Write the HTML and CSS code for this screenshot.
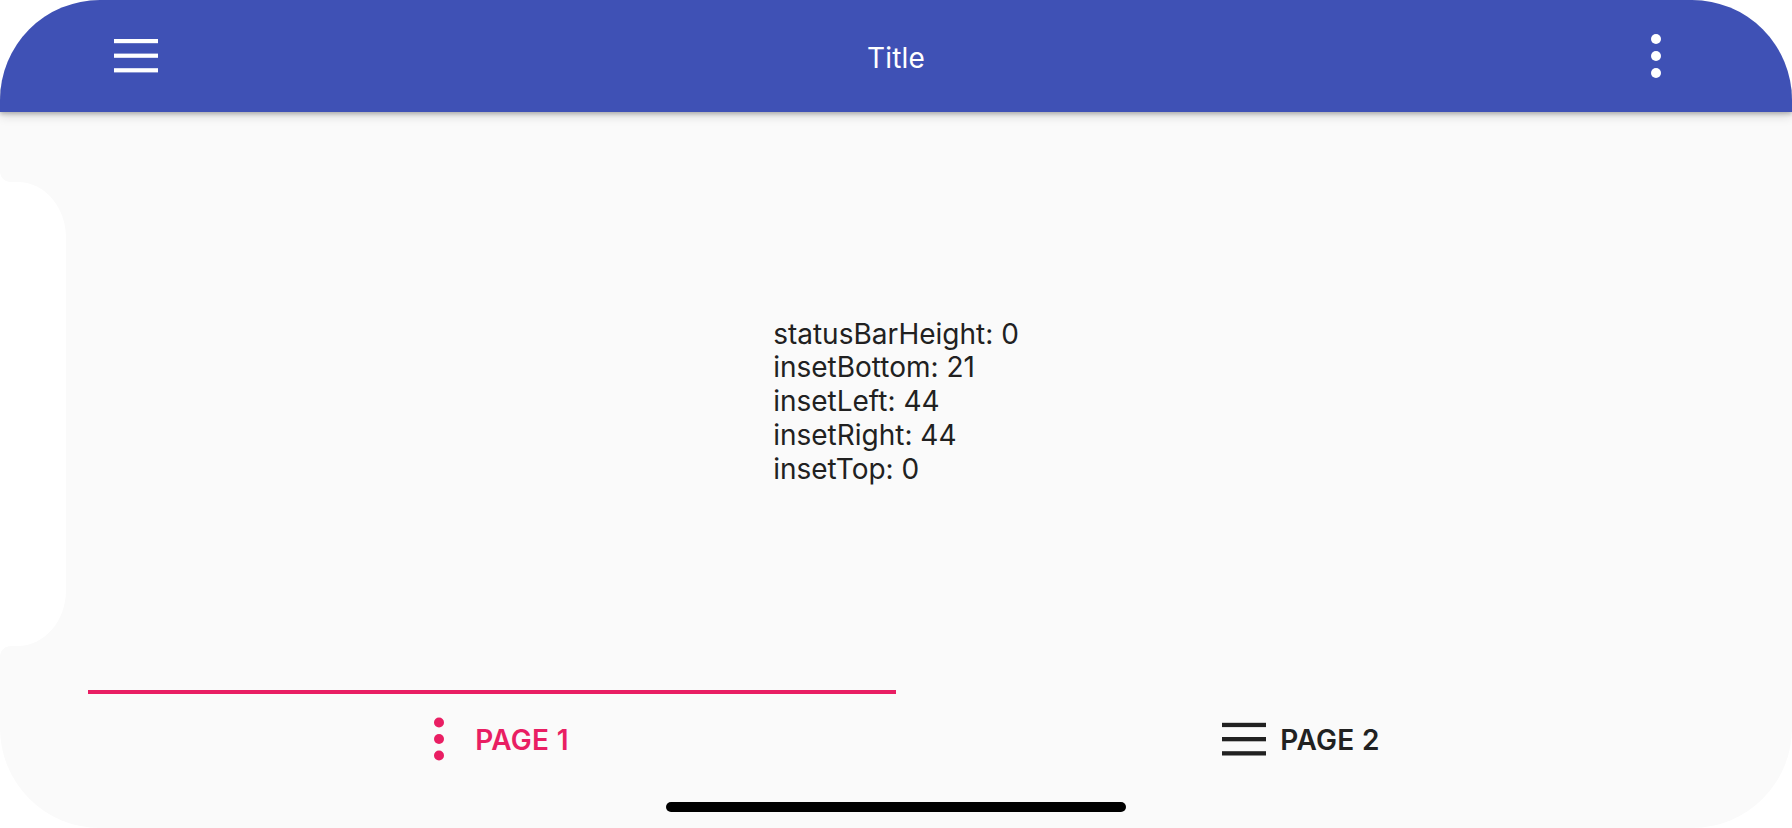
FILE: index.html
```html
<!DOCTYPE html>
<html>
<head>
<meta charset="utf-8">
<link rel="stylesheet" href="styles.css">
</head>
<body>
<div class="screen">
  <header class="appbar">
    <div class="appbar-btn">
      <svg width="48" height="48" viewBox="0 0 48 48"><rect x="2" y="7" width="44" height="4.2" fill="#fff"/><rect x="2" y="21.6" width="44" height="4.2" fill="#fff"/><rect x="2" y="36.2" width="44" height="4.2" fill="#fff"/></svg>
    </div>
    <div class="appbar-title">Title</div>
    <div class="appbar-btn">
      <svg width="48" height="48" viewBox="0 0 48 48"><circle cx="24" cy="7" r="5" fill="#fff"/><circle cx="24" cy="24" r="5" fill="#fff"/><circle cx="24" cy="41" r="5" fill="#fff"/></svg>
    </div>
  </header>
  <main class="content">
    <div class="insets">
      <div>statusBarHeight: 0</div>
      <div>insetBottom: 21</div>
      <div>insetLeft: 44</div>
      <div>insetRight: 44</div>
      <div>insetTop: 0</div>
    </div>
  </main>
  <nav class="tabbar">
    <div class="tab tab-active">
      <svg width="48" height="48" viewBox="0 0 48 48"><circle cx="24" cy="7.5" r="5" fill="#e91e63"/><circle cx="24" cy="24" r="5" fill="#e91e63"/><circle cx="24" cy="40.5" r="5" fill="#e91e63"/></svg>
      <span class="tab-label">PAGE 1</span>
    </div>
    <div class="tab">
      <svg width="48" height="48" viewBox="0 0 48 48"><rect x="2" y="7.8" width="44" height="4.3" fill="#212121"/><rect x="2" y="22" width="44" height="4.3" fill="#212121"/><rect x="2" y="36.2" width="44" height="4.3" fill="#212121"/></svg>
      <span class="tab-label">PAGE 2</span>
    </div>
  </nav>
  <div class="home-area"><div class="home-indicator"></div></div>
  <div class="notch"></div>
</div>
</body>
</html>
```
FILE: styles.css
```css
html, body {
  margin: 0;
  padding: 0;
  background: #ffffff;
}
body {
  width: 1792px;
  height: 828px;
  overflow: hidden;
  font-family: Inter, "Noto Sans", sans-serif;
}
.screen {
  position: relative;
  width: 1792px;
  height: 828px;
  border-radius: 100px;
  overflow: hidden;
  background: #fafafa;
  display: flex;
  flex-direction: column;
}
.appbar {
  height: 112px;
  flex: 0 0 112px;
  background: #3f51b5;
  box-shadow: 0 2px 4px rgba(0,0,0,0.22), 0 4px 10px rgba(0,0,0,0.14);
  display: flex;
  align-items: center;
  justify-content: space-between;
  padding: 0 88px;
  position: relative;
  z-index: 2;
}
.appbar-btn {
  width: 96px;
  height: 96px;
  display: flex;
  align-items: center;
  justify-content: center;
}
.appbar-title {
  color: #fff;
  font-size: 28px;
  font-weight: 400;
  letter-spacing: 0.2px;
  padding-top: 4px;
}
.content {
  flex: 1;
  display: flex;
  align-items: center;
  justify-content: center;
  padding: 0 88px;
}
.insets {
  font-size: 28px;
  line-height: 33.7px;
  color: #212121;
  margin-top: 2px;
}
.tabbar {
  flex: 0 0 96px;
  height: 96px;
  display: flex;
  margin: 0 88px;
}
.tab {
  flex: 1;
  display: flex;
  align-items: center;
  justify-content: center;
  gap: 12px;
  color: #212121;
  border-top: 4px solid transparent;
  box-sizing: border-box;
  padding-bottom: 3px;
}
.tab-active {
  color: #e91e63;
  border-top-color: #e91e63;
}
.tab-label {
  font-size: 28px;
  font-weight: 600;
  letter-spacing: 0.3px;
  padding-top: 2px;
}
.home-area {
  flex: 0 0 42px;
  display: flex;
  justify-content: center;
  align-items: flex-start;
}
.home-indicator {
  margin-top: 16px;
  width: 460px;
  height: 10px;
  border-radius: 5px;
  background: #000;
}
.notch {
  position: absolute;
  left: 0;
  top: 182px;
  width: 66px;
  height: 464px;
  background: #fff;
  border-radius: 0 48px 48px 0 / 0 56px 56px 0;
}
.notch::before,
.notch::after {
  content: "";
  position: absolute;
  left: 0;
  width: 10px;
  height: 10px;
}
.notch::before {
  top: -10px;
  background: radial-gradient(circle at 100% 0, #fafafa 9.5px, #ffffff 10px);
}
.notch::after {
  bottom: -10px;
  background: radial-gradient(circle at 100% 100%, #fafafa 9.5px, #ffffff 10px);
}
```
